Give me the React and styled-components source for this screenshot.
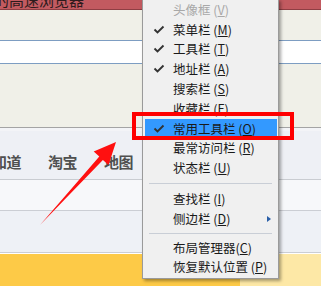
import React from 'react'
import styled, { createGlobalStyle } from 'styled-components'

const GlobalStyle = createGlobalStyle`
  body {
    margin: 0;
    overflow: hidden;
    font-family: "Noto Sans CJK SC", "Noto Sans", sans-serif;
  }
`

const items = [
  { label: '头像框', key: 'V', disabled: true },
  { label: '菜单栏', key: 'M', checked: true },
  { label: '工具栏', key: 'T', checked: true },
  { label: '地址栏', key: 'A', checked: true },
  { label: '搜索栏', key: 'S' },
  { label: '收藏栏', key: 'F' },
  { label: '常用工具栏', key: 'O', checked: true, active: true },
  { label: '最常访问栏', key: 'R' },
  { label: '状态栏', key: 'U' },
  { sep: true, size: 11 },
  { label: '查找栏', key: 'I' },
  { label: '侧边栏', key: 'D', sub: true },
  { sep: true, size: 9 },
  { label: '布局管理器', key: 'C', tight: true },
  { label: '恢复默认位置', key: 'P' },
]

const Check = () => (
  <svg width="12" height="10" viewBox="0 0 12 10">
    <polyline points="1.5,4.5 4.5,7.5 10.5,1.5" fill="none" stroke="#333333" strokeWidth="1.9" />
  </svg>
)

const App = () => {
  return (
    <Page>
      <GlobalStyle />
      <TitleBar><TitleText>的高速浏览器</TitleText></TitleBar>
      <Toolbar />
      <AddressBar />
      <Toolbar $tall />
      <NavBar>
        <NavLink>知道</NavLink>
        <NavLink>淘宝</NavLink>
        <NavLink>地图</NavLink>
      </NavBar>
      <Strip $bg="#f7f8fa" $h={30} />
      <Strip $bg="#eef1f6" $h={41} />
      <Yellow>
        <YellowCell $bg="#fdca47" />
        <YellowCell $bg="#fde8a6" />
      </Yellow>

      <Arrow width="321" height="286" viewBox="0 0 321 286">
        <polygon points="40,225 102.9,159.9 108.5,165 116,142 93.7,151.5 99.3,156.5" fill="#ff1010" />
      </Arrow>

      <Menu>
        {items.map((it, i) =>
          it.sep ? (
            <Separator key={i} $h={it.size} />
          ) : (
            <Item key={i} $active={it.active} $disabled={it.disabled}>
              <CheckSlot>{it.checked && <Check />}</CheckSlot>
              <Label>
                {it.label}{it.tight ? '' : ' '}(<u>{it.key}</u>)
              </Label>
              {it.sub && <SubArrow />}
            </Item>
          )
        )}
      </Menu>
      <RedBox />
    </Page>
  )
}

export default App

const Page = styled.div`
  position: relative;
  width: 321px;
  height: 286px;
  overflow: hidden;
  display: flex;
  flex-direction: column;
  background: #ffffff;
`

const TitleBar = styled.div`
  height: 9px;
  background: #c25a60;
  border-bottom: 1px solid #8e3e43;
  overflow: hidden;
`

const TitleText = styled.div`
  margin-top: -8px;
  margin-left: -6px;
  font-size: 15px;
  line-height: 16px;
  color: #2e1b1c;
  white-space: nowrap;
`

const Toolbar = styled.div`
  height: ${p => (p.$tall ? 63 : 30)}px;
  background: #f0f0e8;
  border-bottom: ${p => (p.$tall ? '1px solid #a4a4a4' : 'none')};
  flex-shrink: 0;
`

const AddressBar = styled.div`
  height: 22px;
  background: #ffffff;
  border-top: 1px solid #7d9dc2;
  border-bottom: 1px solid #7d9dc2;
  flex-shrink: 0;
`

const NavBar = styled.div`
  background: #eef0f5;
  border-top: 3px solid #f3f4f7;
  border-bottom: 1px solid #c9ccd1;
  display: flex;
  align-items: center;
  padding-top: 12px;
  box-sizing: border-box;
  height: 52px;
  gap: 27px;
  margin-left: -8px;
  flex-shrink: 0;
`

const NavLink = styled.span`
  font-size: 15px;
  font-weight: 600;
  color: #505050;
  letter-spacing: -0.5px;
`

const Strip = styled.div`
  height: ${p => p.$h}px;
  background: ${p => p.$bg};
  border-bottom: 1px solid #cbced4;
  flex-shrink: 0;
`

const Yellow = styled.div`
  flex: 1;
  display: grid;
  grid-template-columns: 240px 1fr;
  border-top: 1px solid #ffffff;
`

const YellowCell = styled.div`
  background: ${p => p.$bg};
`

const Arrow = styled.svg`
  position: absolute;
  left: 0;
  top: 0;
  pointer-events: none;
`

const Menu = styled.div`
  position: absolute;
  left: 142px;
  top: -1px;
  width: 133px;
  padding: 0 1px 1px 1px;
  background: #f0f0f0;
  border: 1px solid #9a9a9a;
  box-shadow: 2px 2px 3px rgba(0, 0, 0, 0.35);
  display: flex;
  flex-direction: column;
`

const Item = styled.div`
  position: relative;
  height: 19.8px;
  display: flex;
  align-items: center;
  margin: 0 0 0 1px;
  background: ${p => (p.$active ? '#3399ff' : 'transparent')};
  color: ${p => (p.$disabled ? '#a8a8a8' : '#1a1a1a')};
`

const CheckSlot = styled.div`
  width: 28px;
  display: flex;
  justify-content: center;
`

const Label = styled.span`
  font-size: 12.5px;
  line-height: 14px;
  white-space: nowrap;
  u {
    text-decoration-thickness: 1px;
    text-underline-offset: 1px;
  }
`

const SubArrow = styled.span`
  position: absolute;
  right: 6px;
  top: 7px;
  width: 0;
  height: 0;
  border-top: 3.5px solid transparent;
  border-bottom: 3.5px solid transparent;
  border-left: 4px solid #2a5fa8;
`

const Separator = styled.div`
  height: ${p => p.$h}px;
  display: flex;
  align-items: center;
  padding: 0 5px;
  &::after {
    content: '';
    flex: 1;
    height: 1px;
    background: #c9ced6;
  }
`

const RedBox = styled.div`
  position: absolute;
  left: 132px;
  top: 112px;
  width: 154px;
  height: 20px;
  border: 4px solid #ff0000;
`
